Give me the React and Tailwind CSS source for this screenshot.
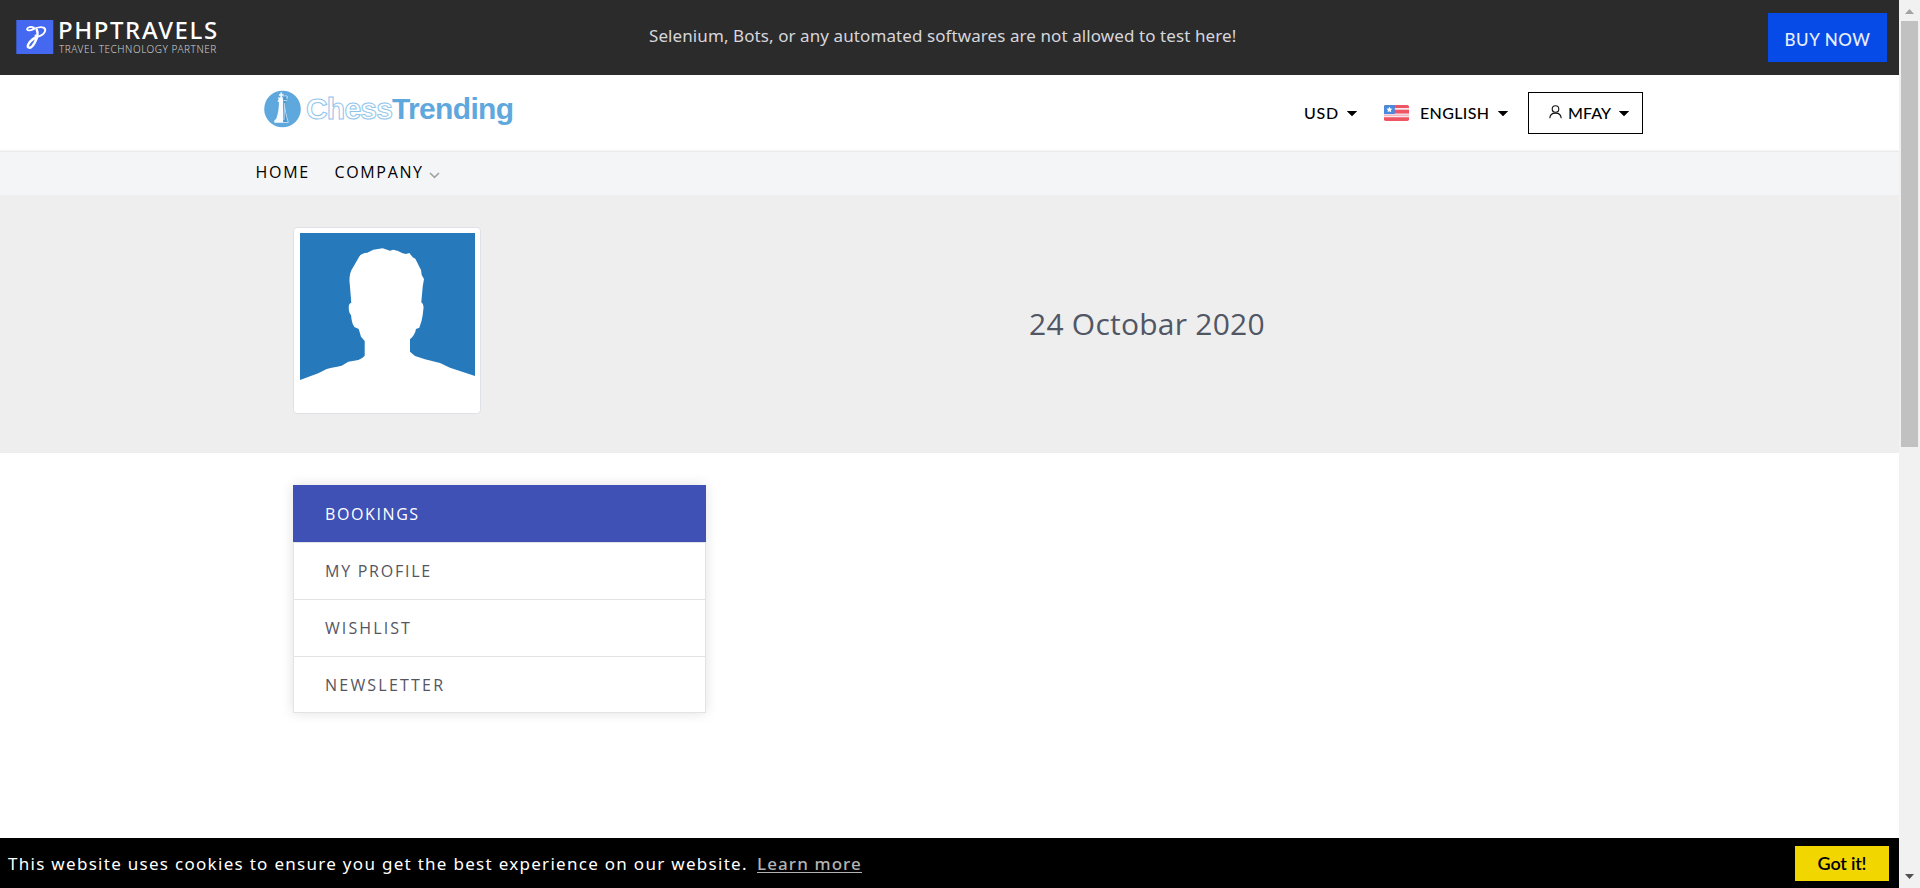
import React from "react";

const menu = [
  { label: "MY PROFILE", style: "h-[57px] tracking-[1.75px]" },
  { label: "WISHLIST", style: "h-[57px] tracking-[2.1px]" },
  { label: "NEWSLETTER", style: "h-14 tracking-[2.22px]" },
];

function Caret() {
  return (
    <svg className="block h-[5px] w-[10px] shrink-0" viewBox="0 0 10 5" fill="currentColor">
      <path d="M0.3 0h9.4c.3 0 .3.3.1.5L5.5 4.8c-.3.3-.7.3-1 0L.2.5C0 .3 0 0 .3 0z" />
    </svg>
  );
}

function Flag() {
  return (
    <svg className="block h-4 w-[25px] shrink-0" viewBox="0 0 25 16">
      <defs>
        <clipPath id="flag-shape">
          <rect width="25" height="16" rx="1.8" />
        </clipPath>
      </defs>
      <g clipPath="url(#flag-shape)">
        <rect width="25" height="16" fill="#f5e9ee" />
        <path d="M0 0h25v3H0zM0 4.800h25v3.600H0zM0 12.200h25V16H0z" fill="#f05565" />
        <path d="M0 9.800h25v.9H0z" fill="#f3a5b0" />
        <rect width="10.8" height="9" fill="#4a89dc" />
        <path d="M5.4 1.700l.9 1.900 2.100.2-1.600 1.400.5 2.100-1.900-1.100-1.900 1.100.5-2.100-1.600-1.400 2.100-.2z" fill="#fff" />
      </g>
    </svg>
  );
}

function TopBar() {
  return (
    <div className="flex h-[75px] shrink-0 items-start bg-[#2b2b2b]">
      <div className="flex w-[649px] pl-4 pt-5">
        <svg className="mr-[5px] block h-[34px] w-[38px]" viewBox="0 0 38 34">
          <rect x="0.3" width="37" height="34" fill="#4468f0" />
          <g fill="none" stroke="#fff" strokeLinecap="round" strokeLinejoin="round">
            <path strokeWidth="1.9" d="M17.8 7.6c-3-1.2-6.3-.4-6.7 1.3-.3 1.6 2.8 2 5.3.8 3.6-1.9 8.4-3.6 11.6-1.8 2.8 1.9.4 6-3.4 7.8-3 1.5-5 1-5.1-.2" />
            <path strokeWidth="2.5" d="M20.8 9.8c1.6 3.6.5 8.4-2.2 13-2 3.5-4.4 5.4-6 4.6-1.9-1.1.2-5 3.3-7.4 1.8-1.5 3.4-2.3 4.8-3.5" />
          </g>
        </svg>
        <div className="font-['Noto_Sans',sans-serif]">
          <div className="-ml-px text-[24px] font-medium leading-[20px] tracking-[1.6px] text-white">PHPTRAVELS</div>
          <div className="pt-[3px] text-[10px] font-light leading-[12px] tracking-[0.52px] text-[#d0d0d0]">TRAVEL TECHNOLOGY PARTNER</div>
        </div>
      </div>
      <div className="flex-1 pt-6 font-['Noto_Sans',sans-serif] text-[17px] leading-6 tracking-[0.086px] text-[#d6d6dc]">
        Selenium, Bots, or any automated softwares are not allowed to test here!
      </div>
      <button className="mr-3 mt-[13px] h-[49px] w-[119px] bg-[#064be8] pt-1 font-[Lato,sans-serif] text-[17px] font-medium leading-[45px] tracking-[0.6px] text-[#e8eefc]">
        BUY NOW
      </button>
    </div>
  );
}

function ChessLogo() {
  return (
    <div className="flex h-full items-start pl-2 pt-4">
      <svg className="mt-[-1px] block h-[38px] w-[37px]" viewBox="0 0 37 38">
        <circle cx="18.5" cy="19" r="18.3" fill="#5fa8dd" />
        <path d="M18.6 7l2.2-1.6 2 .8.6 2.6-1.8 1.6 1 1.8-1.4 1.2 1 8 2 11.4h-5.6z" fill="#4b97d0" />
        <path d="M16.4 2.5h1.7v1.8h1.5v1.5h-1.5v1.6h1v25.4h-8.8v-2.4l1.9-1.6c1.9-5 2.7-11.4 2.8-16.9h-1.2v-1.6h1l-.9-2.9h2.5V5.8h-1.5V4.3h1.5z" fill="#f7fbff" />
        <path d="M19.500 6.300c1.600-.9 3.500-.6 4.400.6l-1.600.9 1.500 1.200M19.500 10.600h3.600M20.300 13c.6 6.600 1.800 12.600 4 19.500H19M20.500 15l-.6 15" fill="none" stroke="#c6e0f4" strokeWidth="0.9" />
      </svg>
      <div className="flex pl-[5px] font-['Liberation_Sans',sans-serif] text-[30px] font-bold leading-9">
        <span className="w-[86px] tracking-[-0.8px] text-white [-webkit-text-stroke:1px_#8fc4ea]">Chess</span>
        <span className="tracking-[-0.65px] text-[#5fa8dd]">Trending</span>
      </div>
    </div>
  );
}

function Header() {
  return (
    <header className="h-[76px] shrink-0 bg-white">
      <div className="mx-auto flex h-full w-[1387px] items-center justify-between">
        <ChessLogo />
        <div className="flex items-center font-[Lato,sans-serif] text-base font-medium leading-6 text-black">
          <span className="w-[43px] tracking-[0.8px]">USD</span>
          <Caret />
          <span className="w-[27px]" />
          <Flag />
          <span className="w-[89px] pl-[11px] tracking-[0.36px]">ENGLISH</span>
          <Caret />
          <div className="ml-5 flex h-[42px] w-[115px] items-center border border-black pl-[20px]">
            <svg className="-mt-[3px] block h-[14px] w-[13px]" viewBox="0 0 13 14" fill="none" stroke="#111" strokeWidth="1.1">
              <circle cx="6.5" cy="4" r="3.3" />
              <path d="M.8 13.3c.1-3.2 2.4-5.2 5.7-5.2s5.6 2 5.7 5.2" />
            </svg>
            <span className="w-[57px] pl-[6px] tracking-[0.1px]">MFAY</span>
            <Caret />
          </div>
        </div>
      </div>
    </header>
  );
}

function Nav() {
  return (
    <nav className="h-11 shrink-0 border-t border-[#e9eaeb] bg-[#f4f5f7] shadow-[0_-1px_2px_rgba(0,0,0,0.05)]">
      <div className="mx-auto flex w-[1388px] pt-2 font-['Open_Sans',sans-serif] text-base leading-6 text-black">
        <a className="w-[78px] tracking-[1.7px]">HOME</a>
        <a className="flex items-center pl-px tracking-[1.65px]">
          COMPANY
          <svg className="ml-[5px] mt-[7px] block h-[7px] w-[11px]" viewBox="0 0 11 7" fill="none" stroke="#a0a2a4" strokeWidth="1.7">
            <path d="M1 1l4.5 4.3L10 1" />
          </svg>
        </a>
      </div>
    </nav>
  );
}

function Profile() {
  return (
    <section className="h-[258px] shrink-0 bg-[#eeeeee]">
      <div className="flex pl-[293px] pt-8">
        <div className="h-[187px] w-[188px] rounded-[4px] border border-[#dee2e6] bg-white pl-[6px] pt-[5px]">
          <svg className="block h-[175px] w-[175px]" viewBox="0 0 175 175">
            <path
              fill="#267abc"
              d="M0 0H175V143L150 134.7L140 130L125 126.3L115 123L110 118.7V106.3Q115 102 116 96L119.3 94.7Q122 88 122.7 82L123.6 74Q123.3 70.5 121.3 69.3L122.7 53.7L124 46L121.7 42L121 37L119.3 33.7L117.5 30L115.3 25.7L113 24.5L109.3 20L106 21L102.7 20.3L98 18L93.3 16.7L90 17.7L82.7 15.3L73.3 16.7L67.3 19.7Q61 20 59 24L54 32.7Q51 37 50.3 40.3Q49 46 49.7 50.3L51.3 69.7Q49 70 48.7 74Q48.7 80 51 82Q52 94 56 94.7L58.7 96L61 103.7L64.7 108V122.7Q62 126 58.3 127L48.3 128.7L41.7 132.7Q32 134.5 26.7 136L18.3 140.3L0 147Z"
            />
          </svg>
        </div>
        <div className="pl-[548px] pt-[76px] font-['Open_Sans',sans-serif] text-[30px] leading-[42px] tracking-[0.244px] text-[#515665]">24 Octobar 2020</div>
      </div>
    </section>
  );
}

function SideMenu() {
  return (
    <div className="ml-[293px] mt-8 w-[413px] font-['Open_Sans',sans-serif] text-base shadow-[0_0_12px_rgba(0,0,0,0.12)]">
      <div className="h-[57px] bg-[#3f51b5] pl-8 leading-[59px] tracking-[1.6px] text-white">BOOKINGS</div>
      <div className="border-x border-b border-[#e3e3e3] bg-white text-[#55555f]">
        {menu.map(({ label, style }) => (
          <div key={label} className={`${style} border-t border-[#e3e3e3] pl-[31px] leading-[57px]`}>
            {label}
          </div>
        ))}
      </div>
    </div>
  );
}

function CookieBar() {
  return (
    <div className="flex h-[50px] shrink-0 items-start bg-black pl-2 font-['Noto_Sans',sans-serif] text-[17px] leading-6">
      <span className="w-[749px] whitespace-nowrap pt-[14px] tracking-[1.29px] text-white">
        This website uses cookies to ensure you get the best experience on our website.
      </span>
      <a className="mt-[15px] h-5 border-b border-[#b3b3b3] font-medium leading-[22px] tracking-[1.1px] text-[#b3b3b3]">Learn more</a>
      <button className="ml-auto mr-[10px] mt-2 h-[35px] w-[94px] bg-[#f1d600] text-center font-[Lato,sans-serif] text-[18px] font-semibold leading-[33px] tracking-[-0.2px] text-black">
        Got it!
      </button>
    </div>
  );
}

function Scrollbar() {
  return (
    <div className="flex w-[21px] flex-col items-center bg-[#f1f1f1]">
      <svg className="mt-[9px] block h-[5px] w-[9px]" viewBox="0 0 9 5" fill="#a3a3a3">
        <path d="M4.5 0L9 5H0z" />
      </svg>
      <div className="mt-[7px] h-[426px] w-[17px] bg-[#c1c1c1]" />
      <svg className="mb-[9px] mt-auto block h-[5px] w-[9px]" viewBox="0 0 9 5" fill="#505050">
        <path d="M0 0h9L4.5 5z" />
      </svg>
    </div>
  );
}

export default function App() {
  return (
    <div className="flex h-[888px] w-[1920px] overflow-hidden bg-white">
      <div className="flex w-[1899px] flex-col">
        <TopBar />
        <Header />
        <Nav />
        <Profile />
        <main className="flex-1">
          <SideMenu />
        </main>
        <CookieBar />
      </div>
      <Scrollbar />
    </div>
  );
}
